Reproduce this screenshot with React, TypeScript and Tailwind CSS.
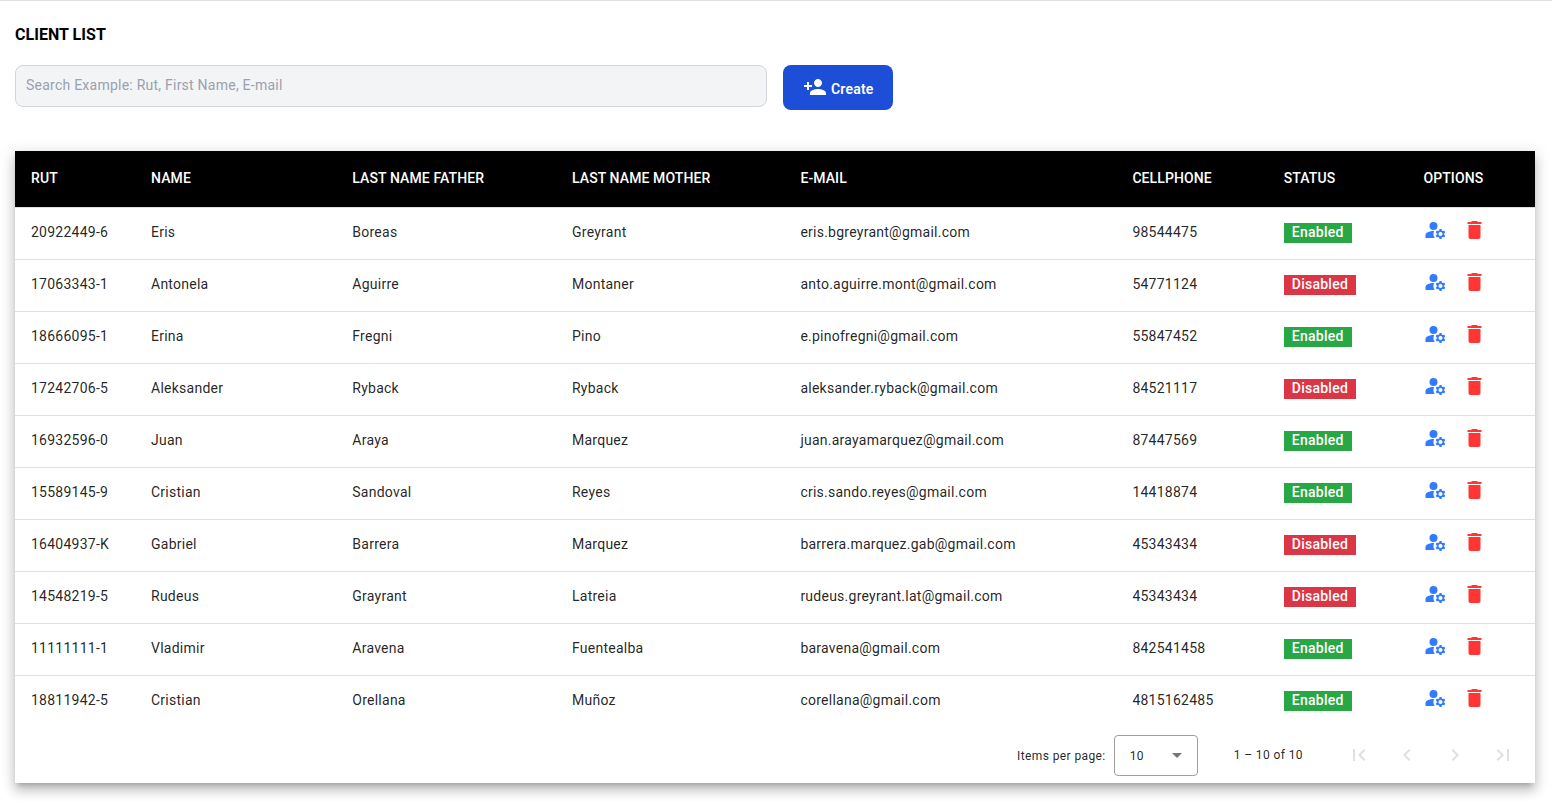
import { MdArrowDropDown, MdChevronLeft, MdChevronRight, MdDelete, MdFirstPage, MdLastPage, MdManageAccounts, MdPersonAdd } from "react-icons/md";

type Client = {
  rut: string;
  name: string;
  father: string;
  mother: string;
  email: string;
  phone: string;
  enabled: boolean;
};

const clients: Client[] = [
  { rut: "20922449-6", name: "Eris", father: "Boreas", mother: "Greyrant", email: "eris.bgreyrant@gmail.com", phone: "98544475", enabled: true },
  { rut: "17063343-1", name: "Antonela", father: "Aguirre", mother: "Montaner", email: "anto.aguirre.mont@gmail.com", phone: "54771124", enabled: false },
  { rut: "18666095-1", name: "Erina", father: "Fregni", mother: "Pino", email: "e.pinofregni@gmail.com", phone: "55847452", enabled: true },
  { rut: "17242706-5", name: "Aleksander", father: "Ryback", mother: "Ryback", email: "aleksander.ryback@gmail.com", phone: "84521117", enabled: false },
  { rut: "16932596-0", name: "Juan", father: "Araya", mother: "Marquez", email: "juan.arayamarquez@gmail.com", phone: "87447569", enabled: true },
  { rut: "15589145-9", name: "Cristian", father: "Sandoval", mother: "Reyes", email: "cris.sando.reyes@gmail.com", phone: "14418874", enabled: true },
  { rut: "16404937-K", name: "Gabriel", father: "Barrera", mother: "Marquez", email: "barrera.marquez.gab@gmail.com", phone: "45343434", enabled: false },
  { rut: "14548219-5", name: "Rudeus", father: "Grayrant", mother: "Latreia", email: "rudeus.greyrant.lat@gmail.com", phone: "45343434", enabled: false },
  { rut: "11111111-1", name: "Vladimir", father: "Aravena", mother: "Fuentealba", email: "baravena@gmail.com", phone: "842541458", enabled: true },
  { rut: "18811942-5", name: "Cristian", father: "Orellana", mother: "Muñoz", email: "corellana@gmail.com", phone: "4815162485", enabled: true },
];

const headings = ["RUT", "NAME", "LAST NAME FATHER", "LAST NAME MOTHER", "E-MAIL", "CELLPHONE", "STATUS", "OPTIONS"];

const columns = "grid grid-cols-[120px_201.3px_219.7px_228.4px_332px_151.4px_139.7px_1fr] items-center border-b border-[#e0e0e0] pl-4";

function ClientRow({ client }: { client: Client }) {
  return (
    <div className={`${columns} h-[52px] pb-1 last:h-[51px] last:border-b-0`}>
      <span>{client.rut}</span>
      <span>{client.name}</span>
      <span>{client.father}</span>
      <span>{client.mother}</span>
      <span>{client.email}</span>
      <span>{client.phone}</span>
      <span className="flex pt-[3px]">
        <span className={`h-5 px-2 leading-[18px] font-medium text-white ${client.enabled ? "bg-[#28a745]" : "bg-[#dc3545]"}`}>
          {client.enabled ? "Enabled" : "Disabled"}
        </span>
      </span>
      <span className="flex translate-x-[0.5px] gap-[15px] pb-1">
        <button aria-label="Edit client">
          <MdManageAccounts className="size-6 text-[#307bff]" />
        </button>
        <button aria-label="Delete client">
          <MdDelete className="size-6 text-[#ff3633]" />
        </button>
      </span>
    </div>
  );
}

function Paginator() {
  return (
    <div className="flex h-[56px] items-center justify-end pr-2 text-[12px] tracking-[0.4px] text-black/87">
      <span className="pt-px">Items per page:</span>
      <button className="mr-9 ml-2 flex h-[41px] w-[84px] items-center justify-between rounded border border-[#9e9e9e] pr-2 pl-[15px]">
        <span className="pt-px">10</span>
        <MdArrowDropDown className="size-6 text-[#757575]" />
      </button>
      <span className="mr-8">1 – 10 of 10</span>
      <div className="flex text-[#e0e0e0]">
        {[MdFirstPage, MdChevronLeft, MdChevronRight, MdLastPage].map((Icon, index) => (
          <button key={index} className="flex size-12 items-center justify-center">
            <Icon className="size-6" />
          </button>
        ))}
      </div>
    </div>
  );
}

export default function App() {
  return (
    <main className="h-screen overflow-hidden border-t border-[#e0e0e0] bg-white px-[15px] pt-[22px] font-['Roboto',sans-serif]">
      <h1 className="text-base leading-6 font-bold tracking-[0.04px] text-black">CLIENT LIST</h1>
      <div className="mt-[18px] flex items-start gap-4">
        <input
          className="h-[42px] w-[752px] rounded-lg border border-gray-300 bg-[#f3f4f6] px-2.5 pb-0.5 text-sm tracking-[0.24px] outline-none placeholder:text-gray-400"
          placeholder="Search Example: Rut, First Name, E-mail"
        />
        <button className="flex h-[45px] w-[110px] items-center rounded-lg bg-[#1d4ed8] pl-5 text-sm font-semibold tracking-[0.2px] text-white">
          <MdPersonAdd className="mr-1 mb-0.5 size-6" />
          <span className="pt-[3px]">Create</span>
        </button>
      </div>
      <section className="mt-[41px] w-[1520px] bg-white text-sm leading-5 tracking-[0.25px] text-black/87 shadow-[0_5px_5px_-3px_rgba(0,0,0,0.2),0_8px_10px_1px_rgba(0,0,0,0.14),0_3px_14px_2px_rgba(0,0,0,0.12)]">
        <div className={`${columns} h-[57px] bg-black bg-clip-padding pb-0.5 font-medium tracking-[0.1px] text-white`}>
          {headings.map((heading) => (
            <span key={heading}>{heading}</span>
          ))}
        </div>
        <div>
          {clients.map((client) => (
            <ClientRow key={client.rut} client={client} />
          ))}
        </div>
        <Paginator />
      </section>
    </main>
  );
}
